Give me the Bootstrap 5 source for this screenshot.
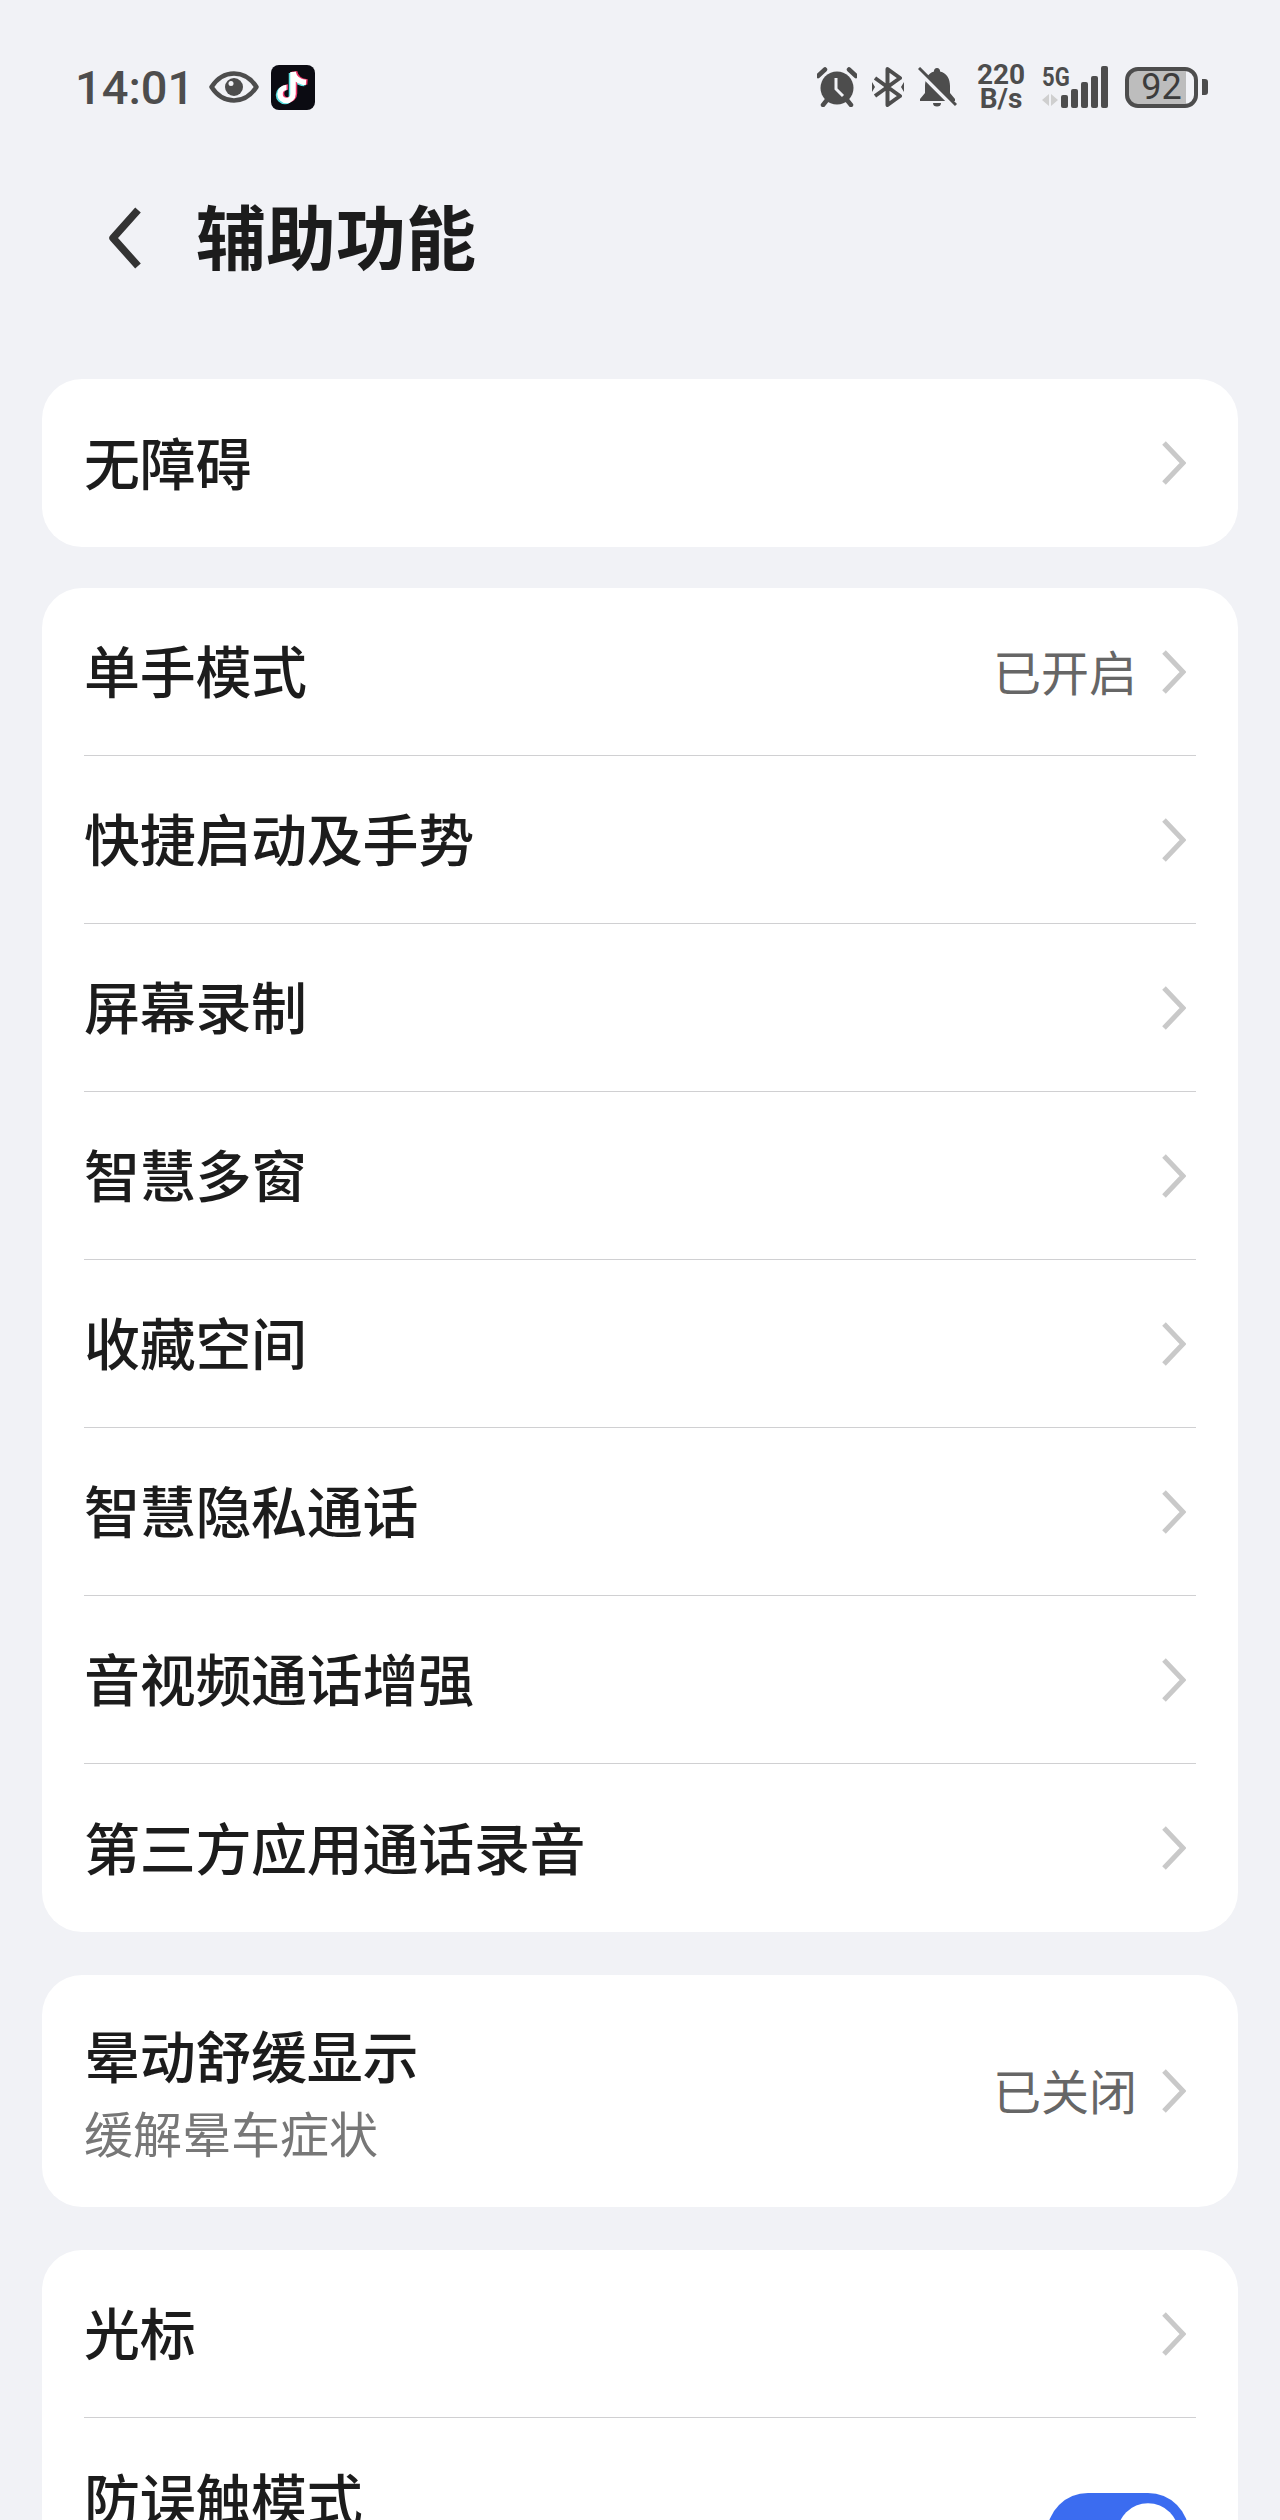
<!DOCTYPE html>
<html lang="zh-CN">
<head>
  <meta charset="UTF-8">
  <title>辅助功能</title>
  <link href="https://cdn.jsdelivr.net/npm/bootstrap@5.3.0/dist/css/bootstrap.min.css" rel="stylesheet">
  <script src="https://cdn.jsdelivr.net/npm/bootstrap@5.3.0/dist/js/bootstrap.bundle.min.js"></script>
  <style>
    html, body { height: 2520px; overflow: hidden; }
    body { background: #f1f2f6; font-family: "Noto Sans CJK SC", "Noto Sans", sans-serif; color: #1c1c1c; }

    .status-bar { height: 174px; padding: 0 72px 0 75px; color: #4d4d4d; font-family: Roboto, "Liberation Sans", sans-serif; }
    .status-time { font-size: 47px; font-weight: 500; line-height: 1; margin-right: 15px; }
    .speed-text { width: 50px; font-size: 28px; font-weight: 700; line-height: 24px; text-align: center; margin: 0 16px 0 19px; }
    .net-wrap { width: 66px; height: 42px; margin-right: 17px; }
    .net-wrap svg { position: absolute; left: 0; top: 0; }
    .net-label { position: absolute; left: 0; top: -2px; font-size: 26px; font-weight: 700; line-height: 1; transform: scaleX(.85); transform-origin: left center; }
    .batt-body { width: 73px; height: 41px; border: 4px solid #4d4d4d; border-radius: 13px; background: linear-gradient(90deg, #bdbdbd 88%, #f1f2f6 88%); font-size: 36px; font-weight: 400; line-height: 1; color: #3c3c3c; }
    .batt-nub { width: 6px; height: 16px; margin-left: 4px; background: #4d4d4d; border-radius: 0 3px 3px 0; }

    .title-bar { height: 128px; margin-bottom: 77px; padding-left: 108px; }
    .title-bar h1 { font-size: 70px; font-weight: 700; margin: 0 0 6px 54px; line-height: 1; color: #1c1c1c; }

    .group-card { margin: 0 42px 43px; border: 0; border-radius: 40px; overflow: hidden; background: #fff; }
    .group-card.first-group { margin-bottom: 41px; }
    .group-card .list-group { --bs-list-group-border-color: #d0d0d2; margin: 0 42px; background: transparent; }
    .set-row { height: 168px; padding: 0; font-size: 56px; line-height: 1.2; color: #1c1c1c; background: transparent; gap: 12px; }
    .set-row.tall { height: 232px; }
    .row-label { font-weight: 500; letter-spacing: -.3px; }
    .set-row > .row-label { padding-bottom: 5px; }
    .row-sub { font-size: 49px; line-height: 1.2; color: #777; margin-top: 16px; }
    .row-value { font-size: 48px; color: #666; line-height: 1; padding-bottom: 4px; }
    .chevron { flex: none; margin-right: 10px; }
    .row-value + .chevron { margin-left: 13px; }
    .form-switch .toggle-blue { width: 142px; height: 82px; margin: 0 7px 0 0; border: 0; background-color: #3b6cf0; }
  </style>
</head>
<body>
  <div class="status-bar d-flex align-items-center">
    <span class="status-time">14:01</span>
    <svg width="50" height="32" viewBox="0 0 50 32" class="me-2">
      <path d="M2.5 16C9 6 16 2.5 25 2.5S41 6 47.500 16C41 26 34 29.500 25 29.500S9 26 2.500 16Z" fill="none" stroke="#4d4d4d" stroke-width="4.500" stroke-linejoin="round"/>
      <circle cx="25" cy="16" r="9" fill="#4d4d4d"/>
      <circle cx="22" cy="12.500" r="2.500" fill="#f1f2f6"/>
    </svg>
    <svg width="44" height="45" viewBox="0 0 44 45" class="ms-1">
      <rect width="44" height="45" rx="8" fill="#0b0b12"/>
      <g fill="none" stroke-width="5.500">
        <path d="M22 7V29A6.500 6.500 0 1 1 15.500 22.500M22 7C23 13 28 17 35 17.500" stroke="#59e0e0" transform="translate(-1.500 1)"/>
        <path d="M22 7V29A6.500 6.500 0 1 1 15.500 22.500M22 7C23 13 28 17 35 17.500" stroke="#f0386b" transform="translate(1.500 -.5)"/>
        <path d="M22 7V29A6.500 6.500 0 1 1 15.500 22.500M22 7C23 13 28 17 35 17.500" stroke="#fff"/>
      </g>
    </svg>

    <svg width="40" height="40" viewBox="0 0 40 40" class="ms-auto">
      <circle cx="20" cy="21" r="16.500" fill="#4d4d4d"/>
      <path d="M19 11V22L26 29" fill="none" stroke="#f1f2f6" stroke-width="3"/>
      <path d="M1 9 8 2.500M39 9 32 2.500M6 38l4-5M34 38l-4-5" stroke="#4d4d4d" stroke-width="4.500" stroke-linecap="round"/>
    </svg>
    <svg width="32" height="40" viewBox="0 0 32 40" style="margin-left:15px">
      <path d="M3 11 28 29 15.500 38V2L28 11 3 29" fill="none" stroke="#4d4d4d" stroke-width="4" stroke-linejoin="round"/>
      <path d="M0 15l3 5-3 5zM32 15l-3 5 3 5z" fill="#4d4d4d"/>
    </svg>
    <svg width="39" height="40" viewBox="0 0 39 40" style="margin-left:14px">
      <path d="M19 1a3 3 0 0 1 3 3.500C29 6 32 12 32 19V26L37 32V34H2V32L7 26V19C7 12 10 6 16 4.500A3 3 0 0 1 19 1Z" fill="#4d4d4d"/>
      <path d="M15 36h8a4 3.500 0 0 1-8 0Z" fill="#4d4d4d"/>
      <path d="M-1 3 36 40" stroke="#f1f2f6" stroke-width="4"/>
      <path d="M1 1 38 38" stroke="#4d4d4d" stroke-width="3"/>
    </svg>
    <div class="speed-text">220<br>B/s</div>
    <div class="net-wrap position-relative">
      <span class="net-label">5G</span>
      <svg width="66" height="42" viewBox="0 0 66 42">
        <path d="M0 34 7 28V40ZM16 34 9 28V40Z" fill="#cfcfcf"/>
        <g fill="#4d4d4d">
          <rect x="19" y="29" width="7" height="13" rx="2"/>
          <rect x="29" y="23" width="7" height="19" rx="2"/>
          <rect x="39" y="16" width="7" height="26" rx="2"/>
          <rect x="49" y="10" width="7" height="32" rx="2"/>
          <rect x="59" y="0" width="7" height="42" rx="2"/>
        </g>
      </svg>
    </div>
    <div class="batt-body d-flex align-items-center justify-content-center">92</div>
    <div class="batt-nub"></div>
  </div>

  <div class="title-bar d-flex align-items-center">
    <svg width="34" height="64" viewBox="0 0 34 64">
      <path d="M30 4 5 32 30 60" fill="none" stroke="#333" stroke-width="7.500" stroke-linejoin="round"/>
    </svg>
    <h1>辅助功能</h1>
  </div>

  <div class="card group-card first-group">
    <div class="list-group list-group-flush">
      <div class="list-group-item set-row d-flex align-items-center">
        <span class="row-label me-auto">无障碍</span>
        <svg class="chevron" width="24" height="44" viewBox="0 0 24 44"><path d="M2 2 21 22 2 42" fill="none" stroke="#c9c9c9" stroke-width="5"/></svg>
      </div>
    </div>
  </div>

  <div class="card group-card">
    <div class="list-group list-group-flush">
      <div class="list-group-item set-row d-flex align-items-center">
        <span class="row-label me-auto">单手模式</span>
        <span class="row-value">已开启</span>
        <svg class="chevron" width="24" height="44" viewBox="0 0 24 44"><path d="M2 2 21 22 2 42" fill="none" stroke="#c9c9c9" stroke-width="5"/></svg>
      </div>
      <div class="list-group-item set-row d-flex align-items-center">
        <span class="row-label me-auto">快捷启动及手势</span>
        <svg class="chevron" width="24" height="44" viewBox="0 0 24 44"><path d="M2 2 21 22 2 42" fill="none" stroke="#c9c9c9" stroke-width="5"/></svg>
      </div>
      <div class="list-group-item set-row d-flex align-items-center">
        <span class="row-label me-auto">屏幕录制</span>
        <svg class="chevron" width="24" height="44" viewBox="0 0 24 44"><path d="M2 2 21 22 2 42" fill="none" stroke="#c9c9c9" stroke-width="5"/></svg>
      </div>
      <div class="list-group-item set-row d-flex align-items-center">
        <span class="row-label me-auto">智慧多窗</span>
        <svg class="chevron" width="24" height="44" viewBox="0 0 24 44"><path d="M2 2 21 22 2 42" fill="none" stroke="#c9c9c9" stroke-width="5"/></svg>
      </div>
      <div class="list-group-item set-row d-flex align-items-center">
        <span class="row-label me-auto">收藏空间</span>
        <svg class="chevron" width="24" height="44" viewBox="0 0 24 44"><path d="M2 2 21 22 2 42" fill="none" stroke="#c9c9c9" stroke-width="5"/></svg>
      </div>
      <div class="list-group-item set-row d-flex align-items-center">
        <span class="row-label me-auto">智慧隐私通话</span>
        <svg class="chevron" width="24" height="44" viewBox="0 0 24 44"><path d="M2 2 21 22 2 42" fill="none" stroke="#c9c9c9" stroke-width="5"/></svg>
      </div>
      <div class="list-group-item set-row d-flex align-items-center">
        <span class="row-label me-auto">音视频通话增强</span>
        <svg class="chevron" width="24" height="44" viewBox="0 0 24 44"><path d="M2 2 21 22 2 42" fill="none" stroke="#c9c9c9" stroke-width="5"/></svg>
      </div>
      <div class="list-group-item set-row d-flex align-items-center">
        <span class="row-label me-auto">第三方应用通话录音</span>
        <svg class="chevron" width="24" height="44" viewBox="0 0 24 44"><path d="M2 2 21 22 2 42" fill="none" stroke="#c9c9c9" stroke-width="5"/></svg>
      </div>
    </div>
  </div>

  <div class="card group-card">
    <div class="list-group list-group-flush">
      <div class="list-group-item set-row tall d-flex align-items-center">
        <div class="me-auto">
          <div class="row-label">晕动舒缓显示</div>
          <div class="row-sub">缓解晕车症状</div>
        </div>
        <span class="row-value">已关闭</span>
        <svg class="chevron" width="24" height="44" viewBox="0 0 24 44"><path d="M2 2 21 22 2 42" fill="none" stroke="#c9c9c9" stroke-width="5"/></svg>
      </div>
    </div>
  </div>

  <div class="card group-card">
    <div class="list-group list-group-flush">
      <div class="list-group-item set-row d-flex align-items-center">
        <span class="row-label me-auto">光标</span>
        <svg class="chevron" width="24" height="44" viewBox="0 0 24 44"><path d="M2 2 21 22 2 42" fill="none" stroke="#c9c9c9" stroke-width="5"/></svg>
      </div>
      <div class="list-group-item set-row tall d-flex align-items-center">
        <div class="me-auto">
          <div class="row-label">防误触模式</div>
          <div class="row-sub">&nbsp;</div>
        </div>
        <div class="form-check form-switch m-0 p-0">
          <input class="form-check-input toggle-blue" type="checkbox" role="switch" checked aria-label="防误触模式">
        </div>
      </div>
    </div>
  </div>
</body>
</html>
